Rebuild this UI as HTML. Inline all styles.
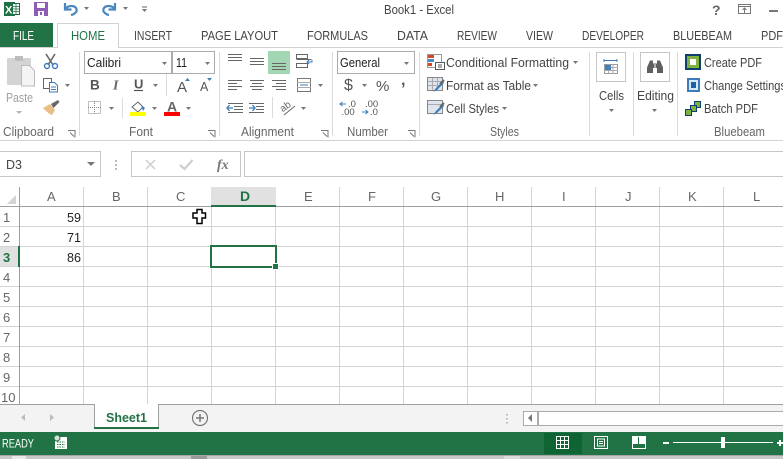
<!DOCTYPE html>
<html><head><meta charset="utf-8"><style>
html,body{margin:0;padding:0;background:#fff;width:783px;height:459px;overflow:hidden}
svg{display:block}
text{font-family:"Liberation Sans",sans-serif;font-size:12.5px;fill:#444}
.g{fill:#666}
.k{fill:#222}
.h{font-size:13px;fill:#666}
.n{font-size:13px;fill:#222}
.d{font-size:9.5px;fill:#555}
.blu{stroke:#4a86bf;fill:none;stroke-width:1.5}
</style></head><body>
<svg width="783" height="459" viewBox="0 0 783 459" xmlns="http://www.w3.org/2000/svg">
<defs>
<path id="ar" d="M1 0h5l-2.500 3z" fill="#777"/>
</defs>
<rect width="783" height="459" fill="#fff"/>

<!-- title bar -->
<rect x="4" y="2" width="11" height="14" fill="#1e7145"/>
<rect x="12.500" y="3.500" width="7" height="11" fill="#fff" stroke="#1e7145"/>
<path d="M13 6.500h6M13 9h6M13 11.500h6M16 4v10" stroke="#1e7145" stroke-width=".8"/>
<text x="5" y="13.500" style="font-size:11px;font-weight:bold;fill:#fff">X</text>
<rect x="34" y="2" width="14" height="14" fill="#8e5bb5"/>
<rect x="37" y="3" width="8" height="5" fill="#fff"/>
<rect x="38" y="11" width="6" height="5" fill="#fff"/>
<rect x="40" y="12" width="2" height="3" fill="#8e5bb5"/>
<path d="M65 3v6.500h6.500" class="blu" style="stroke-width:2.200"/>
<path d="M65.500 9C68 5 75 5 76.500 9C77.500 12 74 14.500 71 15" class="blu" style="stroke-width:2.200"/>
<use href="#ar" x="83" y="7"/>
<path d="M115 3v6.500h-6.500" class="blu" style="stroke-width:2.200"/>
<path d="M114.500 9C112 5 105 5 103.500 9C102.500 12 106 14.500 109 15" class="blu" style="stroke-width:2.200"/>
<use href="#ar" x="122" y="7"/>
<path d="M142 7h5" stroke="#666"/><use href="#ar" x="141" y="9"/>
<text x="384" y="14" textLength="70" lengthAdjust="spacingAndGlyphs">Book1 - Excel</text>
<text x="712" y="15" style="font-size:14px;font-weight:bold;fill:#666">?</text>
<rect x="738.500" y="4.500" width="12" height="9" fill="none" stroke="#777"/><path d="M738 6.500h13M744.500 13v-5M742.500 10l2-2 2 2" stroke="#777" fill="none"/>
<rect x="769" y="10" width="9" height="2" fill="#777"/>

<!-- tabs -->
<rect x="0" y="23" width="53" height="25" fill="#217346"/>
<text x="13" y="40" textLength="21" lengthAdjust="spacingAndGlyphs" style="fill:#fff">FILE</text>
<path d="M0 47.500H57.500V23.500H118.500V47.500H783" fill="none" stroke="#d2d2d2"/>
<rect x="58" y="24" width="60" height="24" fill="#fff"/>
<text x="71" y="40" textLength="34" lengthAdjust="spacingAndGlyphs" style="fill:#217346">HOME</text>
<text x="134" y="40" textLength="38" lengthAdjust="spacingAndGlyphs">INSERT</text>
<text x="201" y="40" textLength="77" lengthAdjust="spacingAndGlyphs">PAGE LAYOUT</text>
<text x="307" y="40" textLength="61" lengthAdjust="spacingAndGlyphs">FORMULAS</text>
<text x="397" y="40" textLength="31" lengthAdjust="spacingAndGlyphs">DATA</text>
<text x="457" y="40" textLength="40" lengthAdjust="spacingAndGlyphs">REVIEW</text>
<text x="526" y="40" textLength="27" lengthAdjust="spacingAndGlyphs">VIEW</text>
<text x="582" y="40" textLength="62" lengthAdjust="spacingAndGlyphs">DEVELOPER</text>
<text x="673" y="40" textLength="59" lengthAdjust="spacingAndGlyphs">BLUEBEAM</text>
<text x="761" y="40" textLength="22" lengthAdjust="spacingAndGlyphs">PDF</text>

<!-- ribbon -->
<path d="M0 140.500H783" stroke="#d2d2d2"/>
<path d="M79.500 52v84M219.500 52v84M332.500 52v84M419.500 52v84M589.500 52v84M633.500 52v84M677.500 52v84" stroke="#dcdcdc"/>
<!-- clipboard -->
<rect x="7" y="58" width="24" height="27" rx="1" fill="#d4d4d4"/>
<rect x="15" y="56" width="8" height="5" fill="#bdbdbd"/>
<path d="M21.500 65.500h8l5 5v15.500h-13z" fill="#f4f4f4" stroke="#bbb"/>
<text x="6" y="102" textLength="27" lengthAdjust="spacingAndGlyphs" style="fill:#a0a0a0;font-size:13px">Paste</text>
<path d="M16 111h6l-3 3z" fill="#b5b5b5"/>
<path d="M46 54l7 11M55 54l-7 11" stroke="#666" stroke-width="1.600"/>
<circle cx="47" cy="66" r="2.500" fill="none" stroke="#3d7cb8" stroke-width="1.400"/><circle cx="55" cy="66" r="2.500" fill="none" stroke="#3d7cb8" stroke-width="1.400"/>
<rect x="43.500" y="78.500" width="8" height="10" fill="#fff" stroke="#666"/><path d="M49.500 82.500h5l3 3v6.500h-8z" fill="#fff" stroke="#3d7cb8"/><path d="M51 87h5M51 89.500h5" stroke="#3d7cb8"/>
<use href="#ar" x="64" y="84"/>
<path d="M43 108l7-4 5 6-3 5c-3-1-6-4-9-7z" fill="#e8be85"/><path d="M51 104l7-4 1.500 2-6 6z" fill="#666"/>
<text x="3" y="136" textLength="51" lengthAdjust="spacingAndGlyphs" class="g">Clipboard</text>
<path d="M68 130.500h7v7M70 132.500l4 4" stroke="#777" fill="none"/>
<!-- font -->
<rect x="84.500" y="51.500" width="87" height="22" fill="#fff" stroke="#ababab"/>
<rect x="171.500" y="51.500" width="43" height="22" fill="#fff" stroke="#ababab"/>
<rect x="171" y="51" width="2" height="23" fill="#ababab"/>
<text x="87" y="67" textLength="34" lengthAdjust="spacingAndGlyphs" class="k" style="font-size:13px">Calibri</text>
<text x="176" y="67" textLength="11" lengthAdjust="spacingAndGlyphs" class="k" style="font-size:13px">11</text>
<use href="#ar" x="161" y="62"/><use href="#ar" x="204" y="62"/>
<text x="90" y="89.500" style="font-size:13.500px;font-weight:bold;fill:#555">B</text>
<text x="113" y="89.500" style="font-size:14px;font-style:italic;font-weight:bold;fill:#666;font-family:'Liberation Serif',serif">I</text>
<text x="134" y="88.500" style="font-size:13px;font-weight:bold;fill:#555">U</text><path d="M134 90.500h9" stroke="#555" stroke-width="1.200"/>
<use href="#ar" x="152" y="84"/>
<path d="M166.500 74v22" stroke="#dcdcdc"/>
<text x="177" y="92" style="font-size:15px;fill:#555">A</text><path d="M185 81h5l-2.500-3z" fill="#3d7cb8"/>
<text x="200" y="91" style="font-size:12.500px;fill:#555">A</text><path d="M207 78h5l-2.500 3z" fill="#3d7cb8"/>
<rect x="88.500" y="101.500" width="12" height="12" fill="none" stroke="#888" stroke-dasharray="1 1"/><path d="M94.500 101v13M88 107.500h13" stroke="#888" stroke-dasharray="1 1"/>
<use href="#ar" x="108" y="107"/>
<path d="M122.500 98v20" stroke="#dcdcdc"/>
<path d="M132 107l6-5 5 5-5 5z" fill="#fff" stroke="#666"/><path d="M141 105l4 3-2 3z" fill="#3d7cb8"/>
<rect x="130" y="112" width="16" height="4" fill="#ffff00"/>
<use href="#ar" x="151" y="107"/>
<text x="167" y="111.500" style="font-size:14px;font-weight:bold;fill:#666">A</text>
<rect x="164" y="112" width="16" height="4" fill="#ff0000"/>
<use href="#ar" x="185" y="107"/>
<text x="129" y="136" textLength="24" lengthAdjust="spacingAndGlyphs" class="g">Font</text>
<path d="M208 130.500h7v7M210 132.500l4 4" stroke="#777" fill="none"/>
<!-- alignment -->
<rect x="268" y="51" width="22" height="23" fill="#a3d7b3"/>
<path d="M228 54.500h14M228 57.500h14M228 60.500h14M250 58.500h14M250 61.500h14M250 64.500h14M272 63.500h14M272 66.500h14M272 69.500h14" stroke="#666"/>
<path d="M296.500 54.500h11v4h-11zM296.500 63.500h11v4h-11zM296.500 59.500h15" fill="none" stroke="#666"/><path d="M312 60v2h-5M309 60l-2 2 2 2" stroke="#3d7cb8" fill="none"/>
<path d="M228 80.500h14M228 83.500h9M228 86.500h14M228 89.500h9M250 80.500h14M252 83.500h10M250 86.500h14M252 89.500h10M272 80.500h14M276 83.500h10M272 86.500h14M276 89.500h10" stroke="#666"/>
<rect x="297.500" y="78.500" width="13" height="13" fill="none" stroke="#777"/><path d="M297 82.500h14M297 87.500h14" stroke="#aaa"/><path d="M300 85h8" stroke="#3d7cb8"/>
<use href="#ar" x="317" y="84"/>
<path d="M228 103.500h15M234 106.500h9M234 109.500h9M228 112.500h15" stroke="#666"/><path d="M227 108h6M229.500 105l-2.500 3 2.500 3" stroke="#3d7cb8" stroke-width="1.300" fill="none"/>
<path d="M249 103.500h15M256 106.500h8M256 109.500h8M249 112.500h15" stroke="#666"/><path d="M249 108h6M252.500 105l2.500 3-2.500 3" stroke="#3d7cb8" stroke-width="1.300" fill="none"/>
<path d="M272.500 97v21" stroke="#dcdcdc"/>
<text x="280" y="110" transform="rotate(-35 285 107)" style="font-size:10px;fill:#666">ab</text>
<path d="M284 115l11-9" stroke="#666"/>
<use href="#ar" x="300" y="107"/>
<text x="241" y="136" textLength="53" lengthAdjust="spacingAndGlyphs" class="g">Alignment</text>
<path d="M321 130.500h7v7M323 132.500l4 4" stroke="#777" fill="none"/>
<!-- number -->
<rect x="337.500" y="51.500" width="77" height="22" fill="#fff" stroke="#ababab"/>
<text x="340" y="67" textLength="40" lengthAdjust="spacingAndGlyphs" class="k" style="font-size:13px">General</text>
<use href="#ar" x="403" y="62"/>
<text x="344" y="90" style="font-size:16px;fill:#555">$</text>
<use href="#ar" x="361" y="84"/>
<text x="376" y="91" style="font-size:15px;fill:#555">%</text>
<text x="401" y="85" style="font-size:16px;font-weight:bold;fill:#555">,</text>
<text x="348" y="107" class="d">.0</text><text x="341.500" y="115" class="d">.00</text>
<path d="M340 104h6M342.500 102l-2.500 2 2.500 2" stroke="#3d7cb8" fill="none"/>
<text x="365" y="107" class="d">.00</text><text x="370" y="115" class="d">.0</text>
<path d="M362 112h6M365.500 110l2.500 2-2.500 2" stroke="#3d7cb8" fill="none"/>
<text x="347" y="136" textLength="41" lengthAdjust="spacingAndGlyphs" class="g">Number</text>
<path d="M408 130.500h7v7M410 132.500l4 4" stroke="#777" fill="none"/>
<!-- styles -->
<rect x="427.500" y="54.500" width="14" height="13" fill="#fff" stroke="#999"/><rect x="428" y="55" width="6" height="3" fill="#d2492a"/><rect x="428" y="59" width="6" height="3" fill="#4a88c4"/><rect x="428" y="63" width="4" height="3" fill="#d2492a"/>
<rect x="435.500" y="62.500" width="9" height="7" fill="#fff" stroke="#555"/><path d="M438 65h4M438 67h4" stroke="#555"/>
<text x="446" y="67" textLength="123" lengthAdjust="spacingAndGlyphs">Conditional Formatting</text><use href="#ar" x="572" y="61"/>
<rect x="427.500" y="77.500" width="15" height="13" fill="#dfe5ef" stroke="#888"/><path d="M428 81.500h14M428 85.500h14M432.500 78v12M437.500 78v12" stroke="#aaa"/>
<path d="M433 92l3-4 7-7 1 2-7 7z" fill="#3d7cb8"/><path d="M440 84l4-4" stroke="#666" stroke-width="2"/>
<text x="446" y="90" textLength="85" lengthAdjust="spacingAndGlyphs">Format as Table</text><use href="#ar" x="532" y="84"/>
<rect x="427.500" y="100.500" width="15" height="13" fill="#dfe5ef" stroke="#888"/><path d="M428 104.500h14" stroke="#aaa"/>
<path d="M433 115l3-4 7-7 1 2-7 7z" fill="#3d7cb8"/><path d="M440 107l4-4" stroke="#666" stroke-width="2"/>
<text x="446" y="113" textLength="53" lengthAdjust="spacingAndGlyphs">Cell Styles</text><use href="#ar" x="501" y="107"/>
<text x="490" y="136" textLength="29" lengthAdjust="spacingAndGlyphs" class="g">Styles</text>
<!-- cells -->
<rect x="596.500" y="52.500" width="29" height="29" fill="#fff" stroke="#c6c6c6"/>
<path d="M604 60.500h13M604 59v3M617 59v3" stroke="#3d7cb8"/>
<rect x="604.500" y="64.500" width="13" height="9" fill="#fff" stroke="#999"/><path d="M604 67.500h14M604 70.500h14M608.500 64v10M613 64v10" stroke="#aaa"/><rect x="605" y="65" width="6" height="5" fill="#4a7fb5"/>
<text x="599" y="100" textLength="25" lengthAdjust="spacingAndGlyphs" style="font-size:13px">Cells</text>
<use href="#ar" x="608" y="109"/>
<!-- editing -->
<rect x="640.500" y="52.500" width="29" height="29" fill="#fff" stroke="#c6c6c6"/>
<path d="M650 60.500h3v3h4v-3h3l3 7v5.500h-6v-5h-4v5h-6v-5.500z" fill="#5f5f5f"/><rect x="654.500" y="64" width="1" height="4" fill="#fff"/>
<text x="637" y="100" textLength="37" lengthAdjust="spacingAndGlyphs" style="font-size:13px">Editing</text>
<use href="#ar" x="651" y="109"/>
<!-- bluebeam -->
<rect x="685" y="54" width="16" height="16" fill="#0e3f6e"/><rect x="687" y="56" width="12" height="12" fill="#7fb23e"/><rect x="690" y="59" width="6" height="6" fill="#fff"/>
<text x="704" y="67" textLength="58" lengthAdjust="spacingAndGlyphs">Create PDF</text>
<rect x="687" y="78" width="13" height="14" fill="#3d7cb8"/><rect x="689" y="80" width="9" height="10" fill="#d5e8f5"/><rect x="691" y="82" width="5" height="6" fill="#1f5fa8"/>
<text x="704" y="90" textLength="82" lengthAdjust="spacingAndGlyphs">Change Settings</text>
<rect x="694.500" y="101.500" width="6" height="6" fill="#7fb23e" stroke="#0e3f6e"/><rect x="690.500" y="105.500" width="6" height="6" fill="#7fb23e" stroke="#0e3f6e"/><rect x="685.500" y="109.500" width="6" height="6" fill="#7fb23e" stroke="#0e3f6e"/>
<text x="704" y="113" textLength="54" lengthAdjust="spacingAndGlyphs">Batch PDF</text>
<text x="714" y="136" textLength="51" lengthAdjust="spacingAndGlyphs" class="g">Bluebeam</text>

<!-- formula bar -->
<rect x="-1" y="151.500" width="101.500" height="25" fill="#fff" stroke="#c6c6c6"/>
<text x="6" y="169" textLength="16" lengthAdjust="spacingAndGlyphs" style="font-size:13px">D3</text>
<path d="M87 162h8l-4 4z" fill="#777"/>
<path d="M116 160v2M116 164v2M116 168v2" stroke="#bbb" stroke-width="2"/>
<rect x="131.500" y="151.500" width="109" height="25" fill="#fff" stroke="#c6c6c6"/>
<rect x="244.500" y="151.500" width="540" height="25" fill="#fff" stroke="#c6c6c6"/>
<path d="M146 160l9 9M155 160l-9 9" stroke="#cfcfcf" stroke-width="1.500"/>
<path d="M180 165l4.500 4 8-9" stroke="#cfcfcf" stroke-width="2.200" fill="none"/>
<text x="217" y="169" style="font-family:'Liberation Serif',serif;font-style:italic;font-weight:bold;font-size:14px;fill:#777">fx</text>

<!-- grid -->
<g stroke="#d4d4d4">
<path d="M83.500 187V404M147.500 187V404M211.500 187V404M275.500 187V404M339.500 187V404M403.500 187V404M467.500 187V404M531.500 187V404M595.500 187V404M659.500 187V404M723.500 187V404"/>
<path d="M0 226.500H783M0 246.500H783M0 266.500H783M0 286.500H783M0 306.500H783M0 326.500H783M0 346.500H783M0 366.500H783M0 386.500H783"/>
</g>
<path d="M0 206.500H783M19.500 187V404" stroke="#9f9f9f"/>
<path d="M7 204L16 195V204Z" fill="#d4d4d4"/>
<rect x="211" y="187" width="65" height="19" fill="#e1e1e1"/>
<rect x="211" y="205" width="65" height="2" fill="#217346"/>
<rect x="0" y="247" width="18" height="19" fill="#e1e1e1"/>
<rect x="18" y="246" width="2" height="21" fill="#217346"/>
<text x="47" y="201" class="h">A</text>
<text x="112" y="201" class="h">B</text><text x="176" y="201" class="h">C</text>
<text x="240" y="201" style="font-weight:bold;fill:#217346;font-size:14px">D</text>
<text x="304" y="201" class="h">E</text><text x="368" y="201" class="h">F</text><text x="431" y="201" class="h">G</text><text x="495" y="201" class="h">H</text><text x="562" y="201" class="h">I</text><text x="625" y="201" class="h">J</text><text x="688" y="201" class="h">K</text><text x="753" y="201" class="h">L</text>
<text x="3" y="222" class="h">1</text><text x="3" y="242" class="h">2</text><text x="3" y="262" style="font-size:13px;font-weight:bold;fill:#217346">3</text>
<text x="3" y="282" class="h">4</text><text x="3" y="302" class="h">5</text><text x="3" y="322" class="h">6</text><text x="3" y="342" class="h">7</text><text x="3" y="362" class="h">8</text><text x="3" y="382" class="h">9</text><text x="1" y="402" class="h">10</text>
<text x="67" y="222" class="n" textLength="14" lengthAdjust="spacingAndGlyphs">59</text>
<text x="67" y="242" class="n" textLength="14" lengthAdjust="spacingAndGlyphs">71</text>
<text x="67" y="262" class="n" textLength="14" lengthAdjust="spacingAndGlyphs">86</text>
<rect x="211" y="246" width="65" height="21" fill="none" stroke="#217346" stroke-width="2"/>
<rect x="272.500" y="263.500" width="6" height="6" fill="#217346" stroke="#fff"/>
<path d="M197 209.500h5v3.500h3.500v5h-3.500v5.500h-5v-5.500h-4v-5h4z" fill="#fff" stroke="#000" stroke-width="1.500"/>

<!-- sheet tabs -->
<rect x="0" y="404" width="783" height="28" fill="#f3f3f3"/>
<path d="M0 404.500H783" stroke="#9f9f9f"/>
<path d="M94.500 404.500V428M158.500 404.500V428" stroke="#9f9f9f"/>
<rect x="95" y="404" width="63" height="24" fill="#fff"/>
<rect x="94" y="427" width="65" height="2" fill="#217346"/>
<text x="106" y="422" textLength="41" lengthAdjust="spacingAndGlyphs" style="font-weight:bold;fill:#217346;font-size:13px">Sheet1</text>
<path d="M25 414v7l-4-3.500z" fill="#bbb"/><path d="M50 414v7l4-3.500z" fill="#bbb"/>
<circle cx="200" cy="418" r="7.500" fill="none" stroke="#777" stroke-width="1.200"/><path d="M196 418h8M200 414v8" stroke="#777" stroke-width="1.500"/>
<path d="M507 414v1.500M507 418v1.500M507 422v1.500" stroke="#bbb" stroke-width="2"/>
<rect x="523.500" y="411.500" width="260" height="14" fill="#fff" stroke="#ababab"/>
<rect x="537" y="412" width="2" height="13" fill="#ababab"/>
<path d="M532 414v8l-4-4z" fill="#777"/>

<!-- status bar -->
<rect x="0" y="432" width="783" height="23" fill="#217346"/>
<text x="2" y="447.500" textLength="32" lengthAdjust="spacingAndGlyphs" style="fill:#fff;font-size:12px">READY</text>
<rect x="55" y="437" width="12" height="12" fill="#fff"/><path d="M57 442h8M57 444.500h8M57 447h8" stroke="#217346" stroke-dasharray="1.500 1"/>
<circle cx="57" cy="438" r="3" fill="#d4e3d9" stroke="#217346"/>
<rect x="544" y="433" width="38" height="21" fill="#0f6434"/>
<path d="M556.500 436.500h12v12h-12zM560.500 436.500v12M564.500 436.500v12M556.500 440.500h12M556.500 444.500h12" fill="none" stroke="#fff"/>
<path d="M594.500 436.500h13v12h-13z" fill="none" stroke="#fff"/><path d="M597.500 439h7v7h-7zM599 441.500h4M599 443.500h4" fill="none" stroke="#fff"/>
<path d="M632.500 436.500h13v12h-13z" fill="none" stroke="#fff"/><rect x="633" y="437" width="5" height="7" fill="#fff"/><rect x="639" y="437" width="6" height="7" fill="#fff"/>
<rect x="663" y="442" width="6" height="2" fill="#fff"/>
<rect x="673" y="442" width="100" height="1" fill="#fff"/>
<rect x="721" y="437" width="4" height="11" fill="#fff"/>
<path d="M777 443h6M780 440v6" stroke="#fff" stroke-width="2"/>
<rect x="0" y="455" width="783" height="4" fill="#c8c8c8"/>
<rect x="0" y="455" width="783" height="1" fill="#a5a5a5"/>
<rect x="12" y="456" width="14" height="3" fill="#e9e9e9"/>
<rect x="191" y="456" width="16" height="3" fill="#999"/>
<rect x="504" y="456" width="16" height="3" fill="#dcdcdc"/>
</svg>
</body></html>
